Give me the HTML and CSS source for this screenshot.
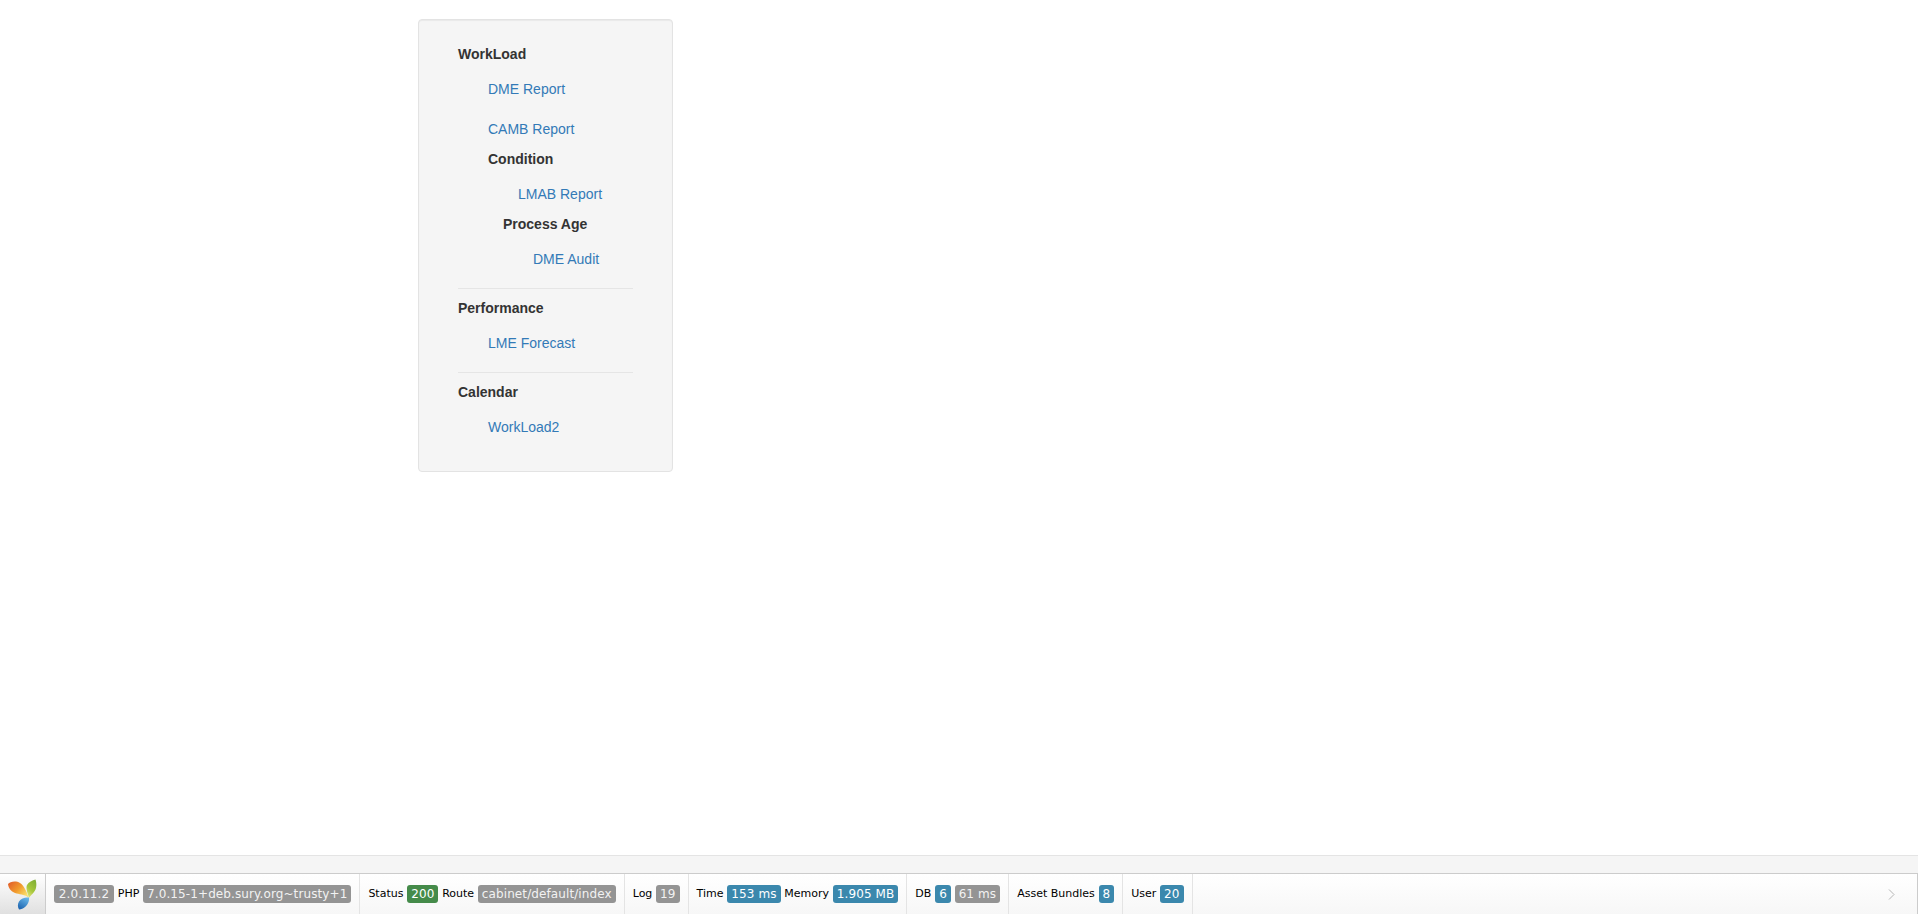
FILE: index.html
```html
<!DOCTYPE html>
<html lang="en">
<head>
<meta charset="utf-8">
<title>Cabinet</title>
<link rel="stylesheet" href="styles.css">
</head>
<body>
<main class="content">
  <nav class="well">
    <div class="head">WorkLoad</div>
    <ul class="nest">
      <li class="link"><a href="#">DME Report</a></li>
      <li class="link"><a href="#">CAMB Report</a></li>
      <li class="head">Condition</li>
      <li>
        <ul class="nest">
          <li class="link"><a href="#">LMAB Report</a></li>
        </ul>
      </li>
      <li class="head head-sub">Process Age</li>
      <li>
        <ul class="nest nest-deep">
          <li class="link"><a href="#">DME Audit</a></li>
        </ul>
      </li>
    </ul>
    <hr class="divider">
    <div class="head">Performance</div>
    <ul class="nest">
      <li class="link"><a href="#">LME Forecast</a></li>
    </ul>
    <hr class="divider">
    <div class="head">Calendar</div>
    <ul class="nest">
      <li class="link"><a href="#">WorkLoad2</a></li>
    </ul>
  </nav>
</main>
<footer class="debug">
  <div class="debug-strip"></div>
  <div class="debug-bar">
    <div class="block block-logo">
      <svg class="logo" width="30" height="32" viewBox="0 0 30 32" aria-hidden="true">
        <defs>
          <linearGradient id="petalOrange" x1="0" y1="0" x2="1" y2="0.7">
            <stop offset="0" stop-color="#e0592a"/>
            <stop offset="0.55" stop-color="#f19a2c"/>
            <stop offset="1" stop-color="#fbe06a"/>
          </linearGradient>
          <linearGradient id="petalGreen" x1="0.8" y1="0" x2="0.3" y2="1">
            <stop offset="0" stop-color="#7fae35"/>
            <stop offset="0.6" stop-color="#a8c83c"/>
            <stop offset="1" stop-color="#e2e27a"/>
          </linearGradient>
          <linearGradient id="petalBlue" x1="0.7" y1="0" x2="0.2" y2="1">
            <stop offset="0" stop-color="#66b5e8"/>
            <stop offset="1" stop-color="#1d63ae"/>
          </linearGradient>
        </defs>
        <path fill="url(#petalOrange)" d="M1 5C3 2.500 9 1.500 13 4C17 6.500 20 13 21.500 18.500C17 15 12 15.500 8 14C4 12.500 1.500 9 1 5Z"/>
        <path fill="url(#petalGreen)" d="M28.500 0.500C30 5 29.500 10 27 13C25.500 15 23.500 16.500 22 19C20.500 14 18.500 9 20 6C21.500 3 25.500 1.500 28.500 0.500Z"/>
        <path fill="url(#petalBlue)" d="M22 18.500C22.500 22.500 20.500 26 18 28C16.500 29.500 14 30.500 12 30.500C10.500 28 10.500 25 12 22.500C14 19.500 18 18 22 18.500Z"/>
      </svg>
    </div>
    <div class="block">
      <span class="tag tag-gray tag-version">2.0.11.2</span>
      <span>PHP</span>
      <span class="tag tag-gray">7.0.15-1+deb.sury.org~trusty+1</span>
    </div>
    <div class="block">
      <span>Status</span>
      <span class="tag tag-green">200</span>
      <span>Route</span>
      <span class="tag tag-gray">cabinet/default/index</span>
    </div>
    <div class="block">
      <span>Log</span>
      <span class="tag tag-gray">19</span>
    </div>
    <div class="block">
      <span>Time</span>
      <span class="tag tag-blue">153 ms</span>
      <span>Memory</span>
      <span class="tag tag-blue">1.905 MB</span>
    </div>
    <div class="block">
      <span>DB</span>
      <span class="tag tag-blue">6</span>
      <span class="tag tag-gray">61 ms</span>
    </div>
    <div class="block">
      <span>Asset Bundles</span>
      <span class="tag tag-blue">8</span>
    </div>
    <div class="block">
      <span>User</span>
      <span class="tag tag-blue">20</span>
    </div>
    <div class="toggle">
      <svg width="7" height="11" viewBox="0 0 7 11" aria-hidden="true">
        <path d="M1 0.500L6 5.500L1 10.500" fill="none" stroke="#b5b5b5" stroke-width="1"/>
      </svg>
    </div>
  </div>
</footer>
</body>
</html>
```

FILE: styles.css
```css
* {
  box-sizing: border-box;
}

html,
body {
  height: 100%;
}

body {
  margin: 0;
  display: flex;
  flex-direction: column;
  background: #fff;
  color: #333;
  font-family: "Liberation Sans", Arial, sans-serif;
  font-size: 14px;
  line-height: 20px;
  overflow: hidden;
}

.content {
  flex: 1;
  padding: 19px 0 0 418px;
}

.well {
  width: 255px;
  padding: 24px 39px 24px;
  background: #f5f5f5;
  border: 1px solid #e3e3e3;
  border-radius: 4px;
  box-shadow: inset 0 1px 1px rgba(0, 0, 0, 0.05);
}

.well ul {
  list-style: none;
  margin: 0;
  padding: 0;
}

.well .nest {
  padding-left: 30px;
}

.well .nest-deep {
  padding-left: 45px;
}

.head {
  height: 25px;
  font-weight: 700;
  color: #333;
}

.head-sub {
  padding-left: 15px;
}

.link {
  padding: 10px 0;
}

.link a {
  color: #337ab7;
  text-decoration: none;
}

.divider {
  height: 1px;
  margin: 9px 0;
  border: 0;
  background: #e5e5e5;
}

.debug {
  flex: none;
  height: 59px;
  border-top: 1px solid #e4e4e4;
  background: #f5f5f5;
  font-family: "DejaVu Sans", Verdana, sans-serif;
  font-size: 11px;
  color: #000;
}

.debug-strip {
  height: 17px;
}

.debug-bar {
  display: flex;
  height: 41px;
  border-top: 1px solid #ccc;
  border-right: 1px solid #ccc;
  background: linear-gradient(#fff 0%, #f7f7f7 100%);
}

.block {
  display: flex;
  align-items: center;
  gap: 3.75px;
  padding: 0 8px;
  border-right: 1px solid #e4e4e4;
  white-space: nowrap;
}

.block-logo {
  width: 46px;
  padding: 0;
  justify-content: center;
  border-right-color: #ccc;
  background: linear-gradient(#fff 0%, #e0e0e0 100%);
}

.logo {
  display: block;
  margin: 1px 0 0 -1px;
}

.tag {
  display: block;
  height: 18px;
  padding: 0 4px;
  border-radius: 3px;
  color: #fff;
  font-size: 12px;
  line-height: 18px;
  letter-spacing: 0.1px;
}

.tag-version {
  min-width: 60px;
  text-align: center;
}

.tag-gray {
  background: #949494;
  color: #f2f2f2;
}

.tag-green {
  background: #458b4a;
}

.tag-blue {
  background: #3b88ad;
}

.toggle {
  flex: 1;
  display: flex;
  align-items: center;
  justify-content: flex-end;
  padding-right: 22px;
}
```
